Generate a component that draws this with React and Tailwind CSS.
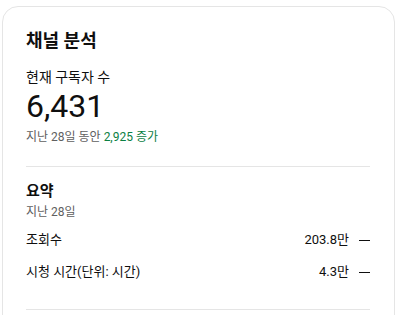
import React from 'react';

const font = { fontFamily: 'Roboto, "Noto Sans CJK KR", sans-serif' };

const rows = [
  { label: '조회수', value: '203.8만' },
  { label: '시청 시간(단위: 시간)', value: '4.3만' },
];

const App = () => {
  return (
    <div className="w-[399px] h-[315px] overflow-hidden bg-white pt-[6px] pl-[2px]" style={font}>
      <div className="w-[393px] h-[340px] rounded-2xl border border-[#e5e5e5] bg-white pl-[23px] pr-[24px] pt-[22px]">
        <h2 className="text-[18px] leading-[24px] font-semibold text-[#0f0f0f]">채널 분석</h2>

        <p className="mt-[14px] text-[14px] leading-[20px] text-[#0f0f0f]">현재 구독자 수</p>
        <p className="mt-[1px] text-[32px] leading-[36px] text-[#0f0f0f]">6,431</p>
        <p className="mt-[5px] text-[12px] leading-[16px] text-[#606060]">
          지난 28일 동안 <span className="text-[#0b8043]">2,925 증가</span>
        </p>

        <div className="mt-[21px] border-t border-[#e5e5e5]" />

        <h3 className="mt-[14px] text-[15px] leading-[20px] font-semibold text-[#0f0f0f]">요약</h3>
        <p className="mt-[3px] text-[12px] leading-[16px] text-[#606060]">지난 28일</p>

        <div className="mt-[4px] flex flex-col">
          {rows.map((r) => (
            <div key={r.label} className="flex items-center h-[32px] text-[13px] text-[#0f0f0f]">
              <span className="flex-1">{r.label}</span>
              <span>{r.value}</span>
              <span className="ml-[10px] w-[11px] h-px bg-[#0f0f0f]" />
            </div>
          ))}
        </div>

        <div className="mt-[21px] border-t border-[#e5e5e5]" />
      </div>
    </div>
  );
};

export default App;
